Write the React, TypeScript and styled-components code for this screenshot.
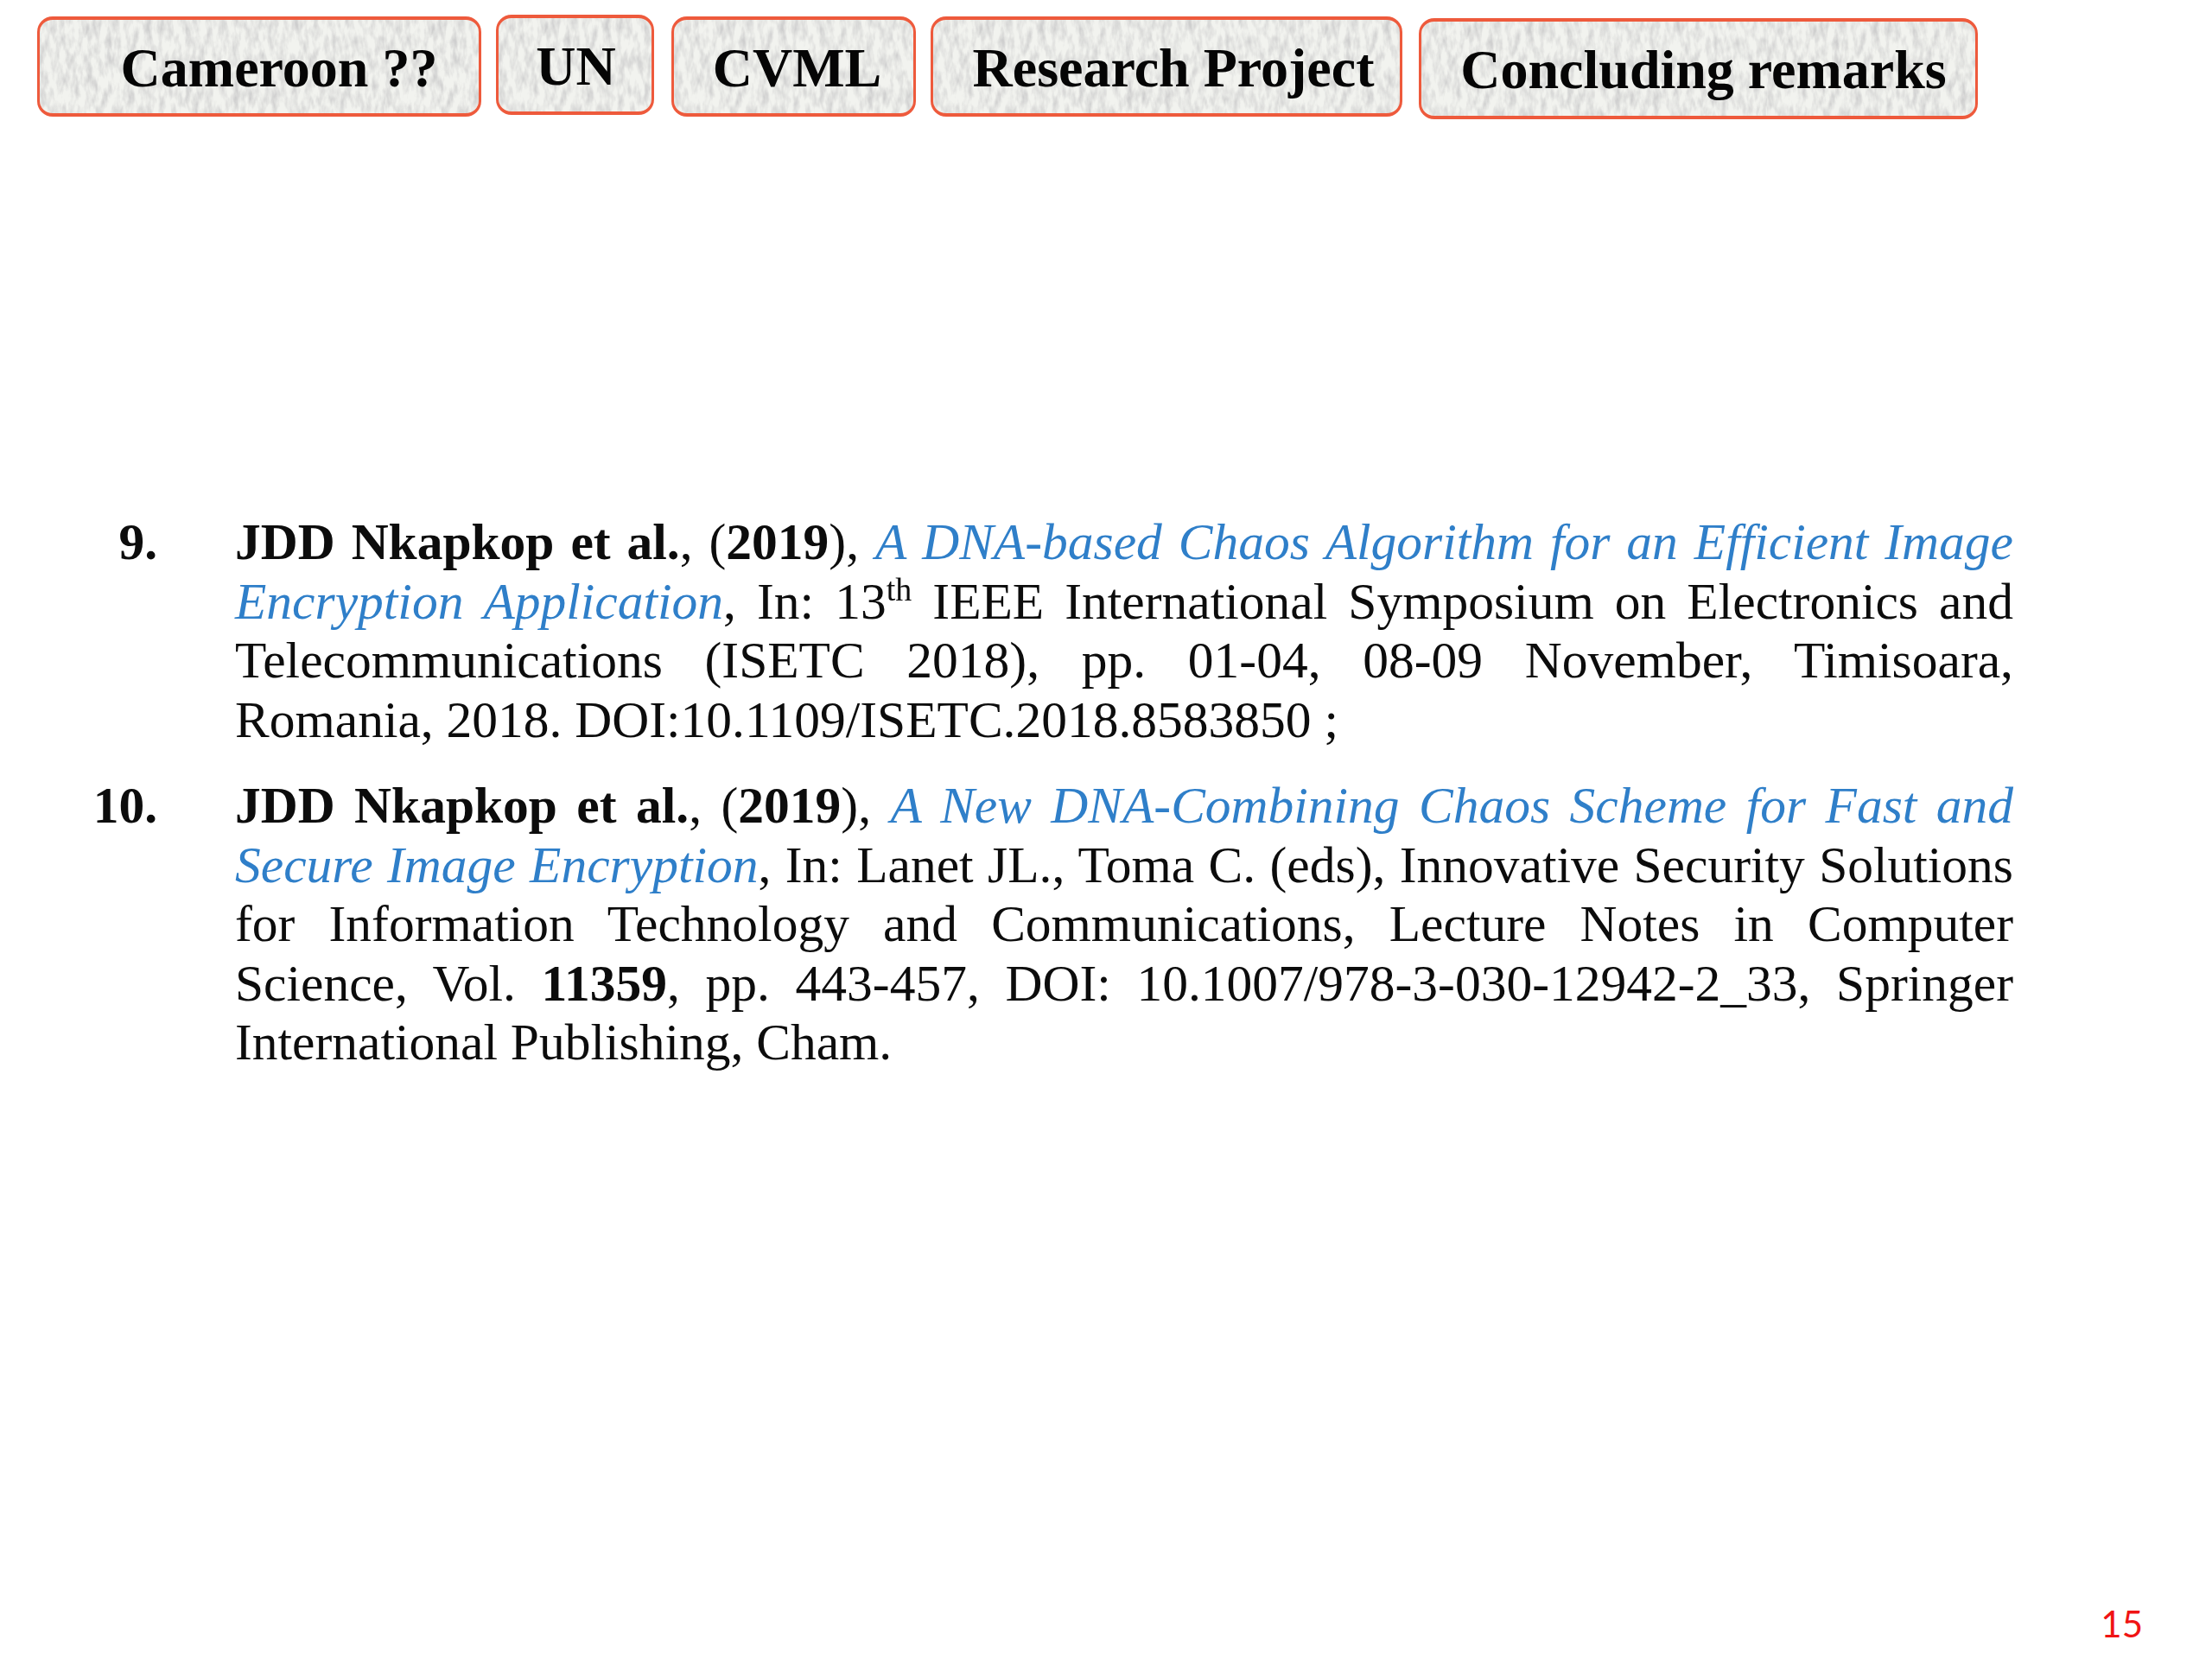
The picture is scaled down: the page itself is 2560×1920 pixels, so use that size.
import React from 'react'
import styled, { createGlobalStyle } from 'styled-components'

const GRAIN =
  "url(\"data:image/svg+xml,%3Csvg xmlns='http://www.w3.org/2000/svg' width='400' height='200'%3E%3Cfilter id='n'%3E%3CfeTurbulence type='fractalNoise' baseFrequency='0.13 0.05' numOctaves='3' seed='7'/%3E%3CfeColorMatrix values='0 0 0 0 0.62 0 0 0 0 0.62 0 0 0 0 0.62 2.2 0 0 0 -0.85'/%3E%3C/filter%3E%3Crect width='400' height='200' filter='url(%23n)'/%3E%3C/svg%3E\")"

const GlobalStyle = createGlobalStyle`
  html, body {
    margin: 0;
    padding: 0;
    background: #fff;
  }
`

const Slide = styled.div`
  width: 2560px;
  height: 1920px;
  display: flex;
  flex-direction: column;
  font-family: 'Liberation Serif', 'Times New Roman', serif;
  color: #0c0c0c;
  overflow: hidden;
`

const Toolbar = styled.nav`
  display: flex;
  align-items: flex-start;
  height: 140px;
  padding-left: 43px;
`

const TabButton = styled.div<{ $width: number; $top: number; $gap: number; $height: number; $shift: number }>`
  box-sizing: border-box;
  width: ${p => p.$width}px;
  height: ${p => p.$height}px;
  margin-top: ${p => p.$top}px;
  margin-right: ${p => p.$gap}px;
  padding-left: ${p => p.$shift}px;
  padding-top: 3px;
  display: flex;
  align-items: center;
  justify-content: center;
  border-style: solid;
  border-color: #ee5a3c;
  border-width: 4px 3px;
  border-radius: 18px;
  background-color: #f2f3ef;
  background-image: ${GRAIN};
  font-size: 64px;
  font-weight: 700;
  color: #050505;
  white-space: nowrap;
  filter: blur(0.5px);
`

const References = styled.section`
  margin-top: 453px;
  padding-left: 90px;
  width: 2240px;
  display: flex;
  flex-direction: column;
  gap: 31px;
  filter: blur(0.55px);
`

const Entry = styled.article`
  display: grid;
  grid-template-columns: 92px 2058px;
  column-gap: 90px;
  font-size: 59.5px;
  line-height: 68.5px;
`

const EntryNumber = styled.div`
  font-weight: 700;
  text-align: right;
`

const Line = styled.div<{ $last?: boolean }>`
  text-align: justify;
  text-align-last: ${p => (p.$last ? 'left' : 'justify')};
  white-space: nowrap;
`

const Title = styled.em`
  color: #2f7fc9;
`

const Sup = styled.sup`
  font-size: 38px;
  line-height: 0;
`

const Footer = styled.footer`
  margin-top: auto;
  display: flex;
  justify-content: flex-end;
  padding: 0 80px 14px 0;
  font-family: Lato, 'Open Sans', sans-serif;
  font-size: 42px;
  line-height: 54px;
  color: #f01414;
`

const tabs = [
  { label: 'Cameroon ??', width: 514, top: 19, height: 116, gap: 17, shift: 46 },
  { label: 'UN', width: 183, top: 17, height: 116, gap: 20, shift: 2 },
  { label: 'CVML', width: 283, top: 19, height: 116, gap: 17, shift: 8 },
  { label: 'Research Project', width: 546, top: 19, height: 116, gap: 19, shift: 16 },
  { label: 'Concluding remarks', width: 647, top: 21, height: 117, gap: 0, shift: 12 },
]

const App: React.FC = () => (
  <>
    <GlobalStyle />
    <Slide>
      <Toolbar>
        {tabs.map(tab => (
          <TabButton
            key={tab.label}
            $width={tab.width}
            $top={tab.top}
            $height={tab.height}
            $gap={tab.gap}
            $shift={tab.shift}
          >
            {tab.label}
          </TabButton>
        ))}
      </Toolbar>
      <References>
        <Entry>
          <EntryNumber>9.</EntryNumber>
          <div>
            <Line>
              <b>JDD Nkapkop et al.</b>, (<b>2019</b>), <Title>A DNA-based Chaos Algorithm for an Efficient Image</Title>
            </Line>
            <Line>
              <Title>Encryption Application</Title>, In: 13<Sup>th</Sup> IEEE International Symposium on Electronics and
            </Line>
            <Line>Telecommunications (ISETC 2018), pp. 01-04, 08-09 November, Timisoara,</Line>
            <Line $last>Romania, 2018. DOI:10.1109/ISETC.2018.8583850 ;</Line>
          </div>
        </Entry>
        <Entry>
          <EntryNumber>10.</EntryNumber>
          <div>
            <Line>
              <b>JDD Nkapkop et al.</b>, (<b>2019</b>), <Title>A New DNA-Combining Chaos Scheme for Fast and</Title>
            </Line>
            <Line>
              <Title>Secure Image Encryption</Title>, In: Lanet JL., Toma C. (eds), Innovative Security Solutions
            </Line>
            <Line>for Information Technology and Communications, Lecture Notes in Computer</Line>
            <Line>
              Science, Vol. <b>11359</b>, pp. 443-457, DOI: 10.1007/978-3-030-12942-2_33, Springer
            </Line>
            <Line $last>International Publishing, Cham.</Line>
          </div>
        </Entry>
      </References>
      <Footer>15</Footer>
    </Slide>
  </>
)

export default App
